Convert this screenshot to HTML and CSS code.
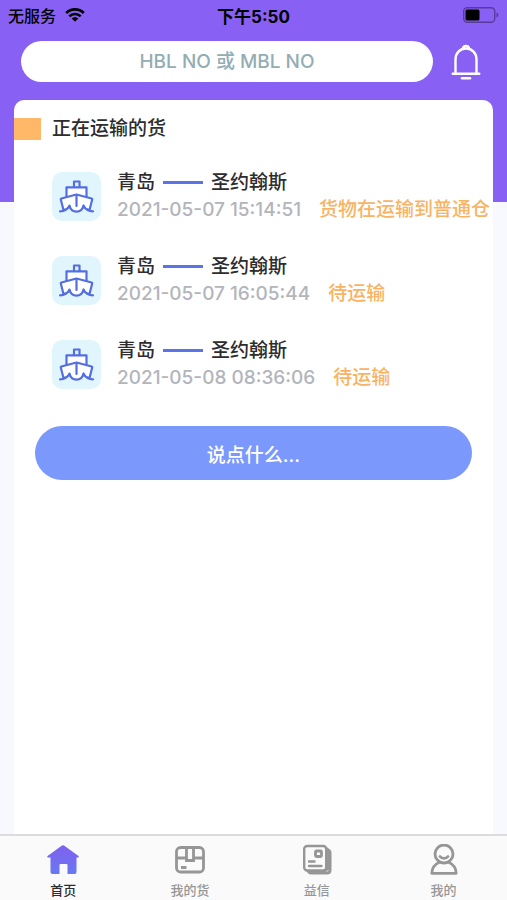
FILE: index.html
```html
<!DOCTYPE html>
<html lang="zh-CN">
<head>
<meta charset="utf-8">
<meta name="viewport" content="width=device-width, initial-scale=1">
<title>首页</title>
<link rel="stylesheet" href="styles.css">
</head>
<body>
<svg class="sprite" aria-hidden="true">
  <symbol id="ship" viewBox="0 0 49 49">
    <g fill="none" stroke="currentColor" stroke-width="2.200" stroke-linejoin="round" stroke-linecap="round">
      <path d="M14.500 25V15.300h20V25" fill="#fff"/>
      <path d="M22 15V9.500h5.500V15"/>
      <path d="M11.500 38L8.800 27.500q-.2-.8.600-1L24.500 22.500l15.100 4q.8.200.6 1L37.500 38q-4.500-.5-6-4.500-1.500 6.200-7 6.200t-7-6.200q-1.500 4-6 4.500z" fill="#fff"/>
      <path d="M24.500 23.500V34M8 39.300q3.500 0 5.500-1.500M41 39.300q-3.500 0-5.500-1.500"/>
    </g>
  </symbol>
</svg>
<div class="app">
  <header class="hero">
    <div class="status-bar">
      <span class="carrier">无服务
        <svg width="20" height="14" viewBox="0 0 20 14" aria-hidden="true">
          <g fill="none" stroke="#000" stroke-width="2.700"><path d="M1.200 5a12.500 12.500 0 0 1 17.600 0M4.300 8.400a8 8 0 0 1 11.400 0"/></g>
          <path d="M6.700 10.600a4.800 4.800 0 0 1 6.600 0L10 13.800z"/>
        </svg>
      </span>
      <span class="clock">下午5:50</span>
      <svg class="battery" width="36" height="16" viewBox="0 0 36 16" aria-hidden="true">
        <rect x=".7" y=".7" width="31" height="14.600" rx="3.500" fill="none" stroke="#583b9c" stroke-width="1.400"/>
        <rect x="2.500" y="2.500" width="14" height="11" rx="1.500"/>
        <path d="M33.500 5.500c2.500 1 2.500 4 0 5z" fill="#583b9c"/>
      </svg>
    </div>
    <div class="search-row">
      <input class="search" type="text" aria-label="提单号" placeholder="HBL NO 或 MBL NO">
      <button class="bell" type="button" aria-label="通知">
        <svg width="30" height="38" viewBox="0 0 30 38" fill="none" stroke="#fff" stroke-width="2.400" stroke-linecap="round" aria-hidden="true">
          <path d="M4.500 30V16.500C4.500 10 9 5.500 15 5.500s10.500 4.500 10.500 11V30M1.700 30.800h26.600M12 5c.8-2.800 5.200-2.800 6 0"/>
          <path d="M11 35.300h8" stroke-width="2.600"/>
        </svg>
      </button>
    </div>
  </header>
  <main class="card">
    <h1 class="card-title">正在运输的货</h1>
    <ul class="shipments">
      <li class="shipment">
        <svg class="ship-tile" width="49" height="49" aria-hidden="true"><use href="#ship"/></svg>
        <div>
          <div class="route"><span>青岛</span><i class="dash"></i><span>圣约翰斯</span></div>
          <div class="meta"><time>2021-05-07 15:14:51</time><span class="state">货物在运输到普通仓</span></div>
        </div>
      </li>
      <li class="shipment">
        <svg class="ship-tile" width="49" height="49" aria-hidden="true"><use href="#ship"/></svg>
        <div>
          <div class="route"><span>青岛</span><i class="dash"></i><span>圣约翰斯</span></div>
          <div class="meta"><time>2021-05-07 16:05:44</time><span class="state">待运输</span></div>
        </div>
      </li>
      <li class="shipment">
        <svg class="ship-tile" width="49" height="49" aria-hidden="true"><use href="#ship"/></svg>
        <div>
          <div class="route"><span>青岛</span><i class="dash"></i><span>圣约翰斯</span></div>
          <div class="meta"><time>2021-05-08 08:36:06</time><span class="state">待运输</span></div>
        </div>
      </li>
    </ul>
    <button class="say" type="button">说点什么...</button>
  </main>
  <nav class="tabs">
    <a class="tab active" href="#home">
      <svg width="34" height="32" viewBox="0 0 34 32" aria-hidden="true">
        <defs><linearGradient id="g" x1="0" y1="0" x2="0" y2="1"><stop offset="0" stop-color="#8060ee"/><stop offset="1" stop-color="#6878f2"/></linearGradient></defs>
        <path d="M16 1.600q1-.8 2 0L32.500 12q1 1.500-.6 1.500H30.500V28q0 2-2 2H21.500V21q0-1-1-1h-6q-1 0-1 1v9H6.500q-2 0-2-2V13.500H2.100Q.5 13.500 1.500 12z" fill="url(#g)"/>
      </svg>首页</a>
    <a class="tab" href="#cargo">
      <svg width="34" height="32" viewBox="0 0 34 32" fill="none" stroke="currentColor" stroke-width="2.800" aria-hidden="true">
        <rect x="3.500" y="3.500" width="27" height="24.500" rx="4"/>
        <path d="M3.500 14h10M20.500 14h10M13.500 4v12.500h7V4M8 23.500h5.500"/>
      </svg>我的货</a>
    <a class="tab" href="#news">
      <svg width="34" height="32" viewBox="0 0 34 32" fill="none" stroke="currentColor" stroke-width="2.400" stroke-linecap="round" aria-hidden="true">
        <path d="M7 28l-2-3L26 2.500l4 3q1.500 1 1.500 3V26q0 4.500-4.500 4.500H11q-2.500 0-4-2.500z" fill="currentColor" stroke="none"/>
        <rect x="4.200" y="2" width="22" height="24.500" rx="3" fill="#fafafa"/>
        <rect x="15.500" y="7" width="6" height="5.500" rx="1" stroke-width="2.800"/>
        <path d="M9 17.500h5.500M9 22h12.500"/>
        <path d="M27 27.500l1-1" stroke="#fafafa" stroke-width="1"/>
      </svg>益信</a>
    <a class="tab" href="#me">
      <svg width="34" height="32" viewBox="0 0 34 32" fill="none" stroke="currentColor" stroke-width="2.800" stroke-linejoin="round" stroke-linecap="round" aria-hidden="true">
        <circle cx="17" cy="10" r="9"/>
        <path d="M13 12.500c2 2.500 6 2.500 8 0M12 18.500C7.500 20.500 5 24 4.800 29.300h24.400c-.2-5.300-2.700-8.800-7.200-10.800"/>
      </svg>我的</a>
  </nav>
</div>
</body>
</html>
```
FILE: styles.css
```css
* {
  box-sizing: border-box;
}

body {
  margin: 0;
  background: #f8f9fe;
  color: #2d2d2d;
  font-family: Inter, "Noto Sans CJK SC", sans-serif;
  font-size: 19px;
  font-weight: 500;
}

button,
input {
  border: 0;
  font: inherit;
}

.sprite {
  display: none;
}

.app {
  display: flex;
  flex-direction: column;
  min-height: 100vh;
}

.hero {
  padding-bottom: 120px;
  background: #8860f3;
}

.status-bar {
  display: grid;
  grid-template-columns: 1fr auto 1fr;
  align-items: center;
  height: 30px;
  padding: 0 8px;
  color: #000;
  font-size: 16px;
}

.carrier {
  display: flex;
  align-items: center;
  gap: 9px;
}

.clock {
  font-size: 17px;
  font-weight: 700;
}

.battery {
  justify-self: end;
}

.search-row {
  display: flex;
  align-items: center;
  gap: 18px;
  padding: 11px 26px 0 21px;
}

.search {
  flex: 1;
  min-width: 0;
  height: 41px;
  border-radius: 21px;
  background: #fff;
  color: #2d2d2d;
  text-align: center;
}

.search::placeholder {
  color: #93adb3;
  opacity: 1;
}

.bell {
  display: flex;
  padding: 0;
  background: none;
}

.card {
  flex: 1;
  margin: -102px 14px 0;
  padding-top: 15px;
  border-radius: 10px 10px 0 0;
  background: #fff;
}

.card-title {
  display: flex;
  align-items: center;
  gap: 11px;
  margin: 0;
  font-size: 19px;
  font-weight: 500;
  line-height: 28px;
}

.card-title::before {
  width: 27px;
  height: 22px;
  background: #ffb868;
  content: "";
}

.shipments {
  display: grid;
  gap: 30px;
  margin: 0;
  padding: 26px 0 0 38px;
  list-style: none;
}

.shipment {
  display: flex;
  align-items: center;
  gap: 16px;
  white-space: nowrap;
}

.ship-tile {
  flex: none;
  border-radius: 10px;
  background: #e1f5fd;
  color: #536ee0;
}

.route,
.meta {
  display: flex;
  align-items: center;
  line-height: 27px;
}

.route {
  gap: 8px;
}

.dash {
  width: 40px;
  height: 3px;
  background: #5874e8;
}

.meta {
  gap: 18px;
  color: #b2b5bc;
}

.state {
  color: #f8b364;
}

.say {
  display: block;
  width: calc(100% - 42px);
  height: 54px;
  margin: 35px 21px 0;
  border-radius: 27px;
  background: #7b98fc;
  color: #fff;
}

.tabs {
  display: grid;
  grid-template-columns: repeat(4, 1fr);
  height: 66px;
  border-top: 2px solid #dcdcdc;
  background: #fafafa;
}

.tab {
  display: flex;
  flex-direction: column;
  align-items: center;
  gap: 4px;
  padding-top: 8px;
  color: #969696;
  font-size: 13px;
  line-height: 20px;
  text-decoration: none;
}

.tab.active {
  color: #2d2d2d;
}
```
